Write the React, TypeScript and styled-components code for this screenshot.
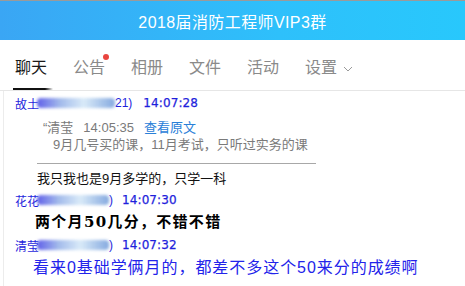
import styled, { createGlobalStyle } from "styled-components";

const GlobalStyle = createGlobalStyle`
  html, body {
    margin: 0;
    padding: 0;
    background: #fff;
    overflow: hidden;
  }
  body {
    font-family: "Liberation Sans", "Noto Sans CJK SC", sans-serif;
  }
`;

const Page = styled.div`
  width: 465px;
  height: 286px;
  display: flex;
  flex-direction: column;
  overflow: hidden;
  border-top: 1px solid #9a9a9a;
  box-sizing: border-box;
`;

const TitleBar = styled.div`
  height: 39px;
  display: flex;
  align-items: center;
  justify-content: center;
  background: linear-gradient(90deg, #3aa6f4 0%, #2ec0fb 60%, #28c8fc 100%);
  color: #fff;
  font-size: 16px;
  letter-spacing: 0.4px;
`;

const Tabs = styled.div`
  height: 50px;
  display: flex;
  align-items: flex-end;
  gap: 26px;
  padding-left: 15px;
  border-bottom: 1px solid #e6e6e6;
`;

const Tab = styled.div<{ active?: boolean; dot?: boolean }>`
  position: relative;
  height: 32px;
  display: flex;
  align-items: flex-start;
  box-sizing: border-box;
  font-size: 16px;
  line-height: 20px;
  color: ${(p) => (p.active ? "#1a1a1a" : "#8a8a8a")};
  &::before {
    content: "";
    display: ${(p) => (p.active ? "block" : "none")};
    position: absolute;
    left: -2px;
    right: -6px;
    bottom: 0;
    height: 2px;
    background: linear-gradient(90deg, #111 0%, #111 80%, rgba(0, 0, 0, 0) 100%);
  }
  &::after {
    content: "";
    display: ${(p) => (p.dot ? "block" : "none")};
    position: absolute;
    top: -4px;
    right: -4px;
    width: 6px;
    height: 6px;
    border-radius: 50%;
    background: #e9453f;
  }
`;

const Chevron = styled.svg`
  margin-left: 6px;
  margin-top: 7px;
`;

const Chat = styled.div`
  flex: 1;
  margin-left: 3px;
  border-left: 1px solid #ececec;
  padding-left: 11px;
  display: flex;
  flex-direction: column;
`;

const NameLine = styled.div<{ top: number }>`
  margin-top: ${(p) => p.top}px;
  height: 16px;
  display: flex;
  align-items: center;
  font-size: 12px;
  color: #1f1fdc;
`;

const Name = styled.span`
  white-space: nowrap;
`;

const Blur = styled.span<{ w: number }>`
  display: inline-block;
  width: ${(p) => p.w}px;
  height: 10px;
  margin-left: -2px;
  border-radius: 4px;
  background: linear-gradient(
    90deg,
    rgba(80, 80, 230, 0.9) 0%,
    rgba(140, 170, 230, 0.8) 30%,
    rgba(200, 225, 245, 0.7) 60%,
    rgba(120, 160, 220, 0.9) 100%
  );
  filter: blur(1.5px);
`;

const Time = styled.span<{ gap: number }>`
  margin-left: ${(p) => p.gap}px;
  font-family: "DejaVu Sans", "Liberation Sans", sans-serif;
  font-size: 12px;
  letter-spacing: 0.1px;
  -webkit-text-stroke: 0.25px #1f1fdc;
`;

const Quote = styled.div`
  margin-left: 22px;
  margin-top: 8px;
  width: 279px;
  padding-bottom: 10px;
  border-bottom: 1px solid #a8a8a8;
  font-size: 13px;
  color: #7a7a7a;
  line-height: 17px;
`;

const QuoteHead = styled.div`
  display: flex;
  gap: 10px;
  padding-left: 6px;
`;

const Link = styled.span`
  color: #2a80d8;
`;

const QuoteBody = styled.div`
  padding-left: 16px;
`;

const Msg = styled.div<{ indent: number; top: number }>`
  margin-left: ${(p) => p.indent}px;
  margin-top: ${(p) => p.top}px;
  white-space: nowrap;
`;

const PlainText = styled(Msg)`
  font-size: 13px;
  color: #111;
  line-height: 18px;
`;

const BoldText = styled(Msg)`
  font-size: 15px;
  font-weight: bold;
  letter-spacing: 1.3px;
  color: #000;
  font-family: "DejaVu Serif", "Noto Sans CJK SC", serif;
  line-height: 20px;
`;

const BlueText = styled(Msg)`
  font-size: 16px;
  letter-spacing: 0.95px;
  color: #2323ea;
  line-height: 20px;
`;

export default function App() {
  return (
    <>
      <GlobalStyle />
      <Page>
        <TitleBar>2018届消防工程师VIP3群</TitleBar>
        <Tabs>
          <Tab active>聊天</Tab>
          <Tab dot>公告</Tab>
          <Tab>相册</Tab>
          <Tab>文件</Tab>
          <Tab>活动</Tab>
          <Tab>
            设置
            <Chevron width="10" height="8" viewBox="0 0 10 8">
              <path d="M1 2 L5 6 L9 2" fill="none" stroke="#9a9a9a" strokeWidth="1" />
            </Chevron>
          </Tab>
        </Tabs>
        <Chat>
          <NameLine top={4}>
            <Name>故土</Name>
            <Blur w={78} />
            <Name>21)</Name>
            <Time gap={11}>14:07:28</Time>
          </NameLine>
          <Quote>
            <QuoteHead>
              <span>“清莹</span>
              <span>14:05:35</span>
              <Link>查看原文</Link>
            </QuoteHead>
            <QuoteBody>9月几号买的课，11月考试，只听过实务的课</QuoteBody>
          </Quote>
          <PlainText indent={22} top={6}>
            我只我也是9月多学的，只学一科
          </PlainText>
          <NameLine top={4}>
            <Name>花花</Name>
            <Blur w={72} />
            <Name>)</Name>
            <Time gap={9}>14:07:30</Time>
          </NameLine>
          <BoldText indent={20} top={4}>
            两个月50几分，不错不错
          </BoldText>
          <NameLine top={5}>
            <Name>清莹</Name>
            <Blur w={72} />
            <Name>)</Name>
            <Time gap={9}>14:07:32</Time>
          </NameLine>
          <BlueText indent={18} top={5}>
            看来0基础学俩月的，都差不多这个50来分的成绩啊
          </BlueText>
        </Chat>
      </Page>
    </>
  );
}
